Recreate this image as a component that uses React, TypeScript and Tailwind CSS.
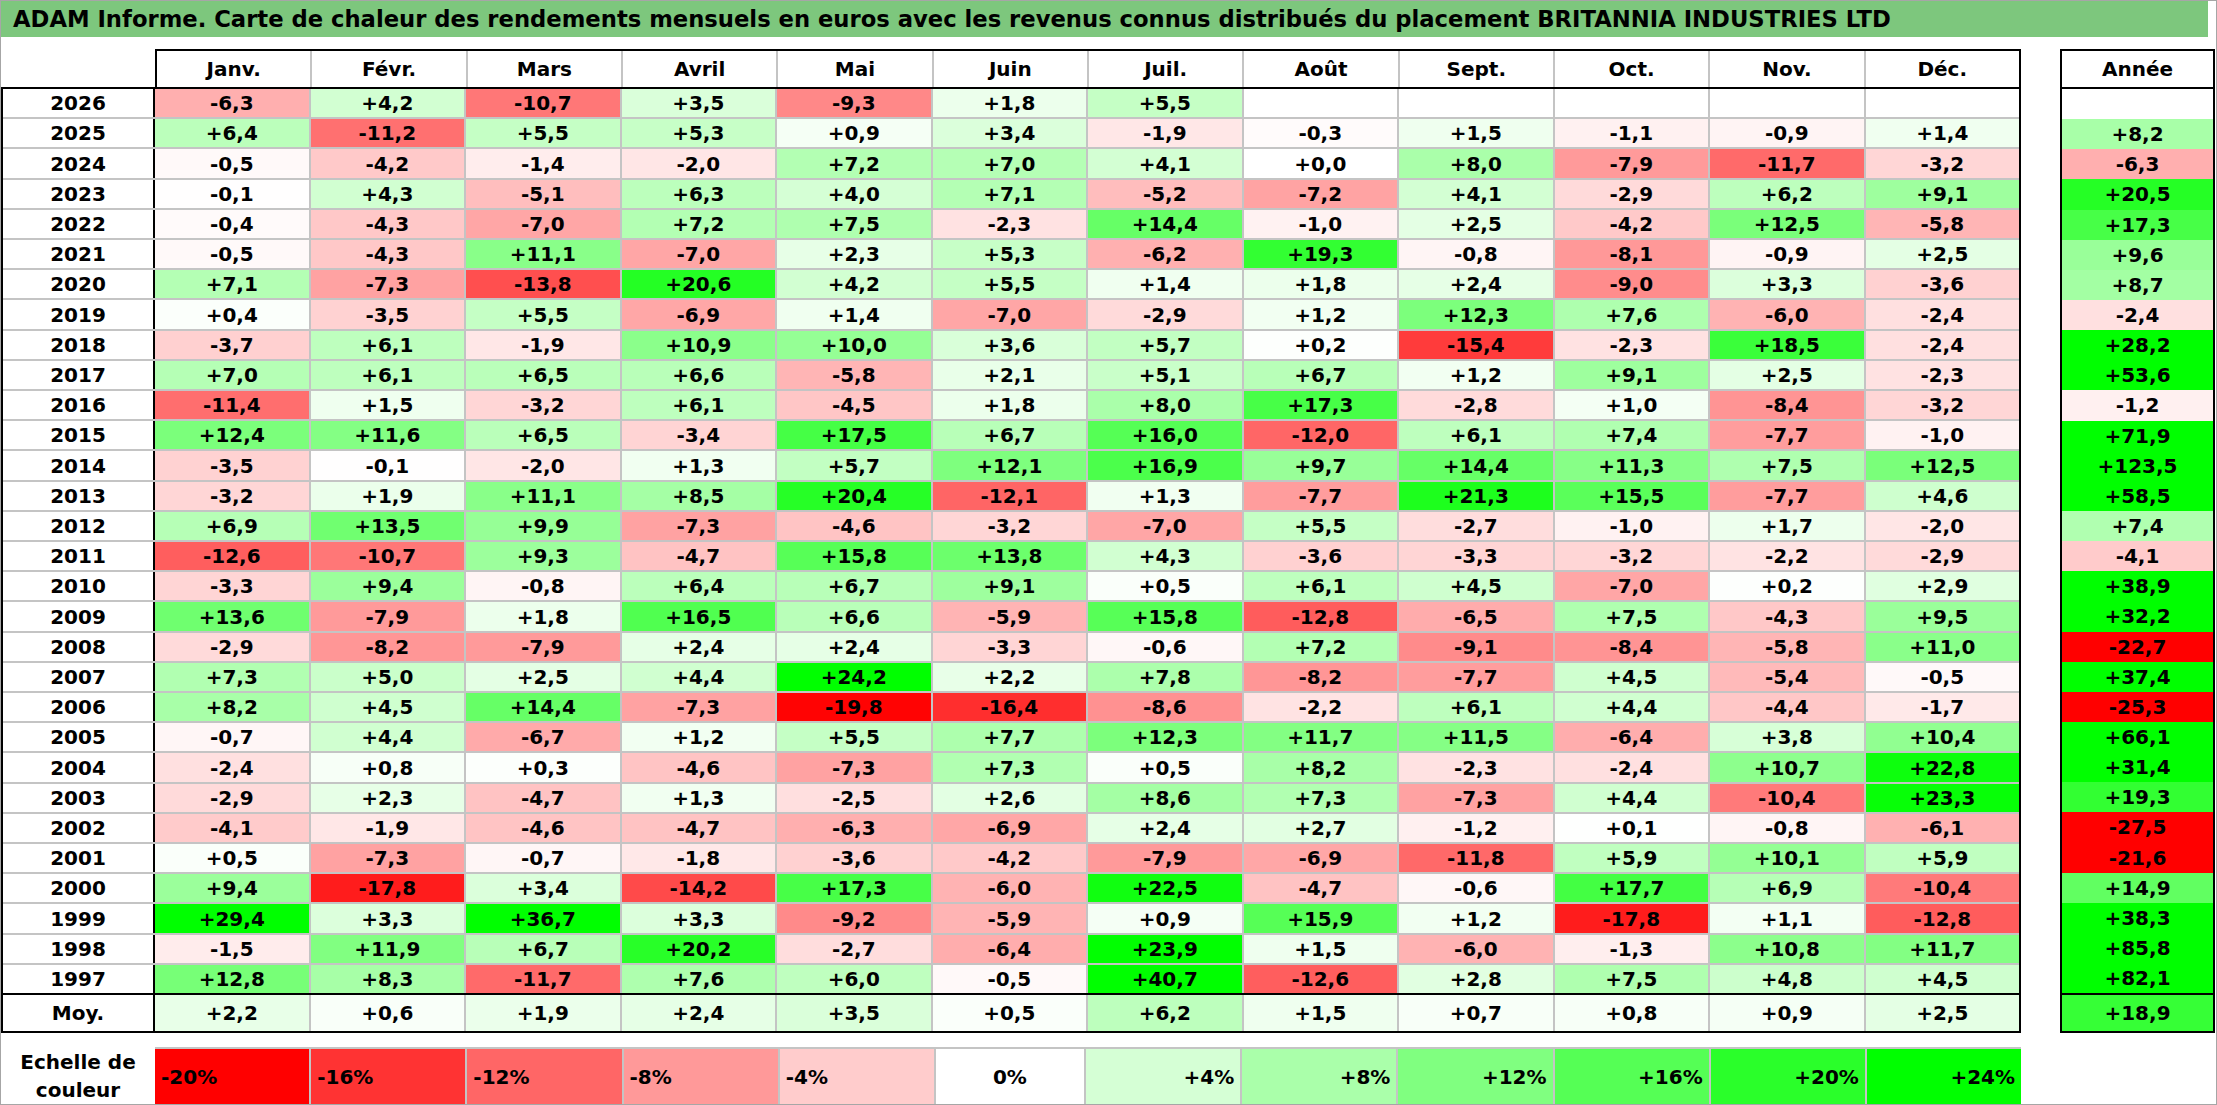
const MONTHS = ['Janv.', 'Févr.', 'Mars', 'Avril', 'Mai', 'Juin', 'Juil.', 'Août', 'Sept.', 'Oct.', 'Nov.', 'Déc.'];

// year | 12 monthly values | yearly total ("." = empty)
const RAW = [
  '2026|-6,3 +4,2 -10,7 +3,5 -9,3 +1,8 +5,5 . . . . .|.',
  '2025|+6,4 -11,2 +5,5 +5,3 +0,9 +3,4 -1,9 -0,3 +1,5 -1,1 -0,9 +1,4|+8,2',
  '2024|-0,5 -4,2 -1,4 -2,0 +7,2 +7,0 +4,1 +0,0 +8,0 -7,9 -11,7 -3,2|-6,3',
  '2023|-0,1 +4,3 -5,1 +6,3 +4,0 +7,1 -5,2 -7,2 +4,1 -2,9 +6,2 +9,1|+20,5',
  '2022|-0,4 -4,3 -7,0 +7,2 +7,5 -2,3 +14,4 -1,0 +2,5 -4,2 +12,5 -5,8|+17,3',
  '2021|-0,5 -4,3 +11,1 -7,0 +2,3 +5,3 -6,2 +19,3 -0,8 -8,1 -0,9 +2,5|+9,6',
  '2020|+7,1 -7,3 -13,8 +20,6 +4,2 +5,5 +1,4 +1,8 +2,4 -9,0 +3,3 -3,6|+8,7',
  '2019|+0,4 -3,5 +5,5 -6,9 +1,4 -7,0 -2,9 +1,2 +12,3 +7,6 -6,0 -2,4|-2,4',
  '2018|-3,7 +6,1 -1,9 +10,9 +10,0 +3,6 +5,7 +0,2 -15,4 -2,3 +18,5 -2,4|+28,2',
  '2017|+7,0 +6,1 +6,5 +6,6 -5,8 +2,1 +5,1 +6,7 +1,2 +9,1 +2,5 -2,3|+53,6',
  '2016|-11,4 +1,5 -3,2 +6,1 -4,5 +1,8 +8,0 +17,3 -2,8 +1,0 -8,4 -3,2|-1,2',
  '2015|+12,4 +11,6 +6,5 -3,4 +17,5 +6,7 +16,0 -12,0 +6,1 +7,4 -7,7 -1,0|+71,9',
  '2014|-3,5 -0,1 -2,0 +1,3 +5,7 +12,1 +16,9 +9,7 +14,4 +11,3 +7,5 +12,5|+123,5',
  '2013|-3,2 +1,9 +11,1 +8,5 +20,4 -12,1 +1,3 -7,7 +21,3 +15,5 -7,7 +4,6|+58,5',
  '2012|+6,9 +13,5 +9,9 -7,3 -4,6 -3,2 -7,0 +5,5 -2,7 -1,0 +1,7 -2,0|+7,4',
  '2011|-12,6 -10,7 +9,3 -4,7 +15,8 +13,8 +4,3 -3,6 -3,3 -3,2 -2,2 -2,9|-4,1',
  '2010|-3,3 +9,4 -0,8 +6,4 +6,7 +9,1 +0,5 +6,1 +4,5 -7,0 +0,2 +2,9|+38,9',
  '2009|+13,6 -7,9 +1,8 +16,5 +6,6 -5,9 +15,8 -12,8 -6,5 +7,5 -4,3 +9,5|+32,2',
  '2008|-2,9 -8,2 -7,9 +2,4 +2,4 -3,3 -0,6 +7,2 -9,1 -8,4 -5,8 +11,0|-22,7',
  '2007|+7,3 +5,0 +2,5 +4,4 +24,2 +2,2 +7,8 -8,2 -7,7 +4,5 -5,4 -0,5|+37,4',
  '2006|+8,2 +4,5 +14,4 -7,3 -19,8 -16,4 -8,6 -2,2 +6,1 +4,4 -4,4 -1,7|-25,3',
  '2005|-0,7 +4,4 -6,7 +1,2 +5,5 +7,7 +12,3 +11,7 +11,5 -6,4 +3,8 +10,4|+66,1',
  '2004|-2,4 +0,8 +0,3 -4,6 -7,3 +7,3 +0,5 +8,2 -2,3 -2,4 +10,7 +22,8|+31,4',
  '2003|-2,9 +2,3 -4,7 +1,3 -2,5 +2,6 +8,6 +7,3 -7,3 +4,4 -10,4 +23,3|+19,3',
  '2002|-4,1 -1,9 -4,6 -4,7 -6,3 -6,9 +2,4 +2,7 -1,2 +0,1 -0,8 -6,1|-27,5',
  '2001|+0,5 -7,3 -0,7 -1,8 -3,6 -4,2 -7,9 -6,9 -11,8 +5,9 +10,1 +5,9|-21,6',
  '2000|+9,4 -17,8 +3,4 -14,2 +17,3 -6,0 +22,5 -4,7 -0,6 +17,7 +6,9 -10,4|+14,9',
  '1999|+29,4 +3,3 +36,7 +3,3 -9,2 -5,9 +0,9 +15,9 +1,2 -17,8 +1,1 -12,8|+38,3',
  '1998|-1,5 +11,9 +6,7 +20,2 -2,7 -6,4 +23,9 +1,5 -6,0 -1,3 +10,8 +11,7|+85,8',
  '1997|+12,8 +8,3 -11,7 +7,6 +6,0 -0,5 +40,7 -12,6 +2,8 +7,5 +4,8 +4,5|+82,1',
];

const MOY = '+2,2 +0,6 +1,9 +2,4 +3,5 +0,5 +6,2 +1,5 +0,7 +0,8 +0,9 +2,5'.split(' ');
const MOY_YEAR = '+18,9';

const SCALE = [-20, -16, -12, -8, -4, 0, 4, 8, 12, 16, 20, 24];

const rows = RAW.map((line) => {
  const [year, months, total] = line.split('|');
  return {
    year,
    months: months.split(' ').map((v) => (v === '.' ? '' : v)),
    total: total === '.' ? '' : total,
  };
});

// red at -20, white at 0, green at +24
function heat(v: string | number) {
  if (v === '') return '#ffffff';
  const n = typeof v === 'number' ? v : parseFloat(v.replace(',', '.'));
  if (n < 0) {
    const c = Math.round(255 * (1 - Math.min(1, -n / 20)));
    return `rgb(255,${c},${c})`;
  }
  const c = Math.round(255 * (1 - Math.min(1, n / 24)));
  return `rgb(${c},255,${c})`;
}

export default function App() {
  return (
    <div className="h-[1105px] w-[2217px] overflow-hidden border border-[#a6a6a6] bg-white font-['DejaVu_Sans',sans-serif] text-[20px] font-bold text-black">
      <div className="mr-[8px] flex h-[36px] items-center whitespace-nowrap bg-[#7dc77d] pl-[12px] text-[22.7px]">
        ADAM Informe. Carte de chaleur des rendements mensuels en euros avec les revenus connus distribués du placement BRITANNIA INDUSTRIES LTD
      </div>

      <div className="mt-[12px] flex items-start">
        {/* monthly table */}
        <div className="w-[2020px] shrink-0">
          <div className="flex h-[38px]">
            <div className="w-[154px] shrink-0" />
            <div className="flex flex-1 border-2 border-b-0 border-black">
              {MONTHS.map((m) => (
                <div key={m} className="flex flex-1 items-center justify-center border-r-2 border-[#c4c4c4] last:border-r-0">
                  {m}
                </div>
              ))}
            </div>
          </div>

          <div className="flex h-[908px] flex-col border-2 border-black">
            {rows.map((r) => (
              <div key={r.year} className="flex min-h-0 flex-1 border-b-2 border-[#c4c4c4] last:border-b-0">
                <div className="flex w-[152px] shrink-0 items-center justify-center border-r-2 border-black">{r.year}</div>
                {r.months.map((v, i) => (
                  <div
                    key={i}
                    className="flex flex-1 items-center justify-center border-r-2 border-[#c4c4c4] last:border-r-0"
                    style={{ backgroundColor: heat(v) }}
                  >
                    {v}
                  </div>
                ))}
              </div>
            ))}
          </div>

          <div className="flex h-[38px] border-2 border-t-0 border-black">
            <div className="flex w-[152px] shrink-0 items-center justify-center border-r-2 border-black">Moy.</div>
            {MOY.map((v, i) => (
              <div
                key={i}
                className="flex flex-1 items-center justify-center border-r-2 border-[#c4c4c4] last:border-r-0"
                style={{ backgroundColor: heat(v) }}
              >
                {v}
              </div>
            ))}
          </div>

          <div className="mt-[14px] flex h-[57px]">
            <div className="flex w-[154px] shrink-0 flex-col items-center justify-center leading-[28px]">
              <span>Echelle de</span>
              <span>couleur</span>
            </div>
            <div className="flex flex-1 border-t-2 border-[#c4c4c4]">
              {SCALE.map((s) => (
                <div
                  key={s}
                  className={
                    s < 0
                      ? 'flex flex-1 items-center justify-start border-r-2 border-[#c4c4c4] pl-[6px] last:border-r-0'
                      : s === 0
                        ? 'flex flex-1 items-center justify-center border-r-2 border-[#c4c4c4]'
                        : 'flex flex-1 items-center justify-end border-r-2 border-[#c4c4c4] pr-[6px] last:border-r-0'
                  }
                  style={{ backgroundColor: heat(s) }}
                >
                  {s > 0 ? `+${s}%` : `${s}%`}
                </div>
              ))}
            </div>
          </div>
        </div>

        {/* yearly column */}
        <div className="ml-[39px] w-[155px] shrink-0 border-2 border-black">
          <div className="flex h-[38px] items-center justify-center border-b-2 border-black">Année</div>
          <div className="flex h-[904px] flex-col">
            {rows.map((r) => (
              <div
                key={r.year}
                className="flex min-h-0 flex-1 items-center justify-center"
                style={{ backgroundColor: heat(r.total) }}
              >
                {r.total}
              </div>
            ))}
          </div>
          <div
            className="flex h-[38px] items-center justify-center border-t-2 border-black"
            style={{ backgroundColor: heat(MOY_YEAR) }}
          >
            {MOY_YEAR}
          </div>
        </div>
      </div>
    </div>
  );
}
